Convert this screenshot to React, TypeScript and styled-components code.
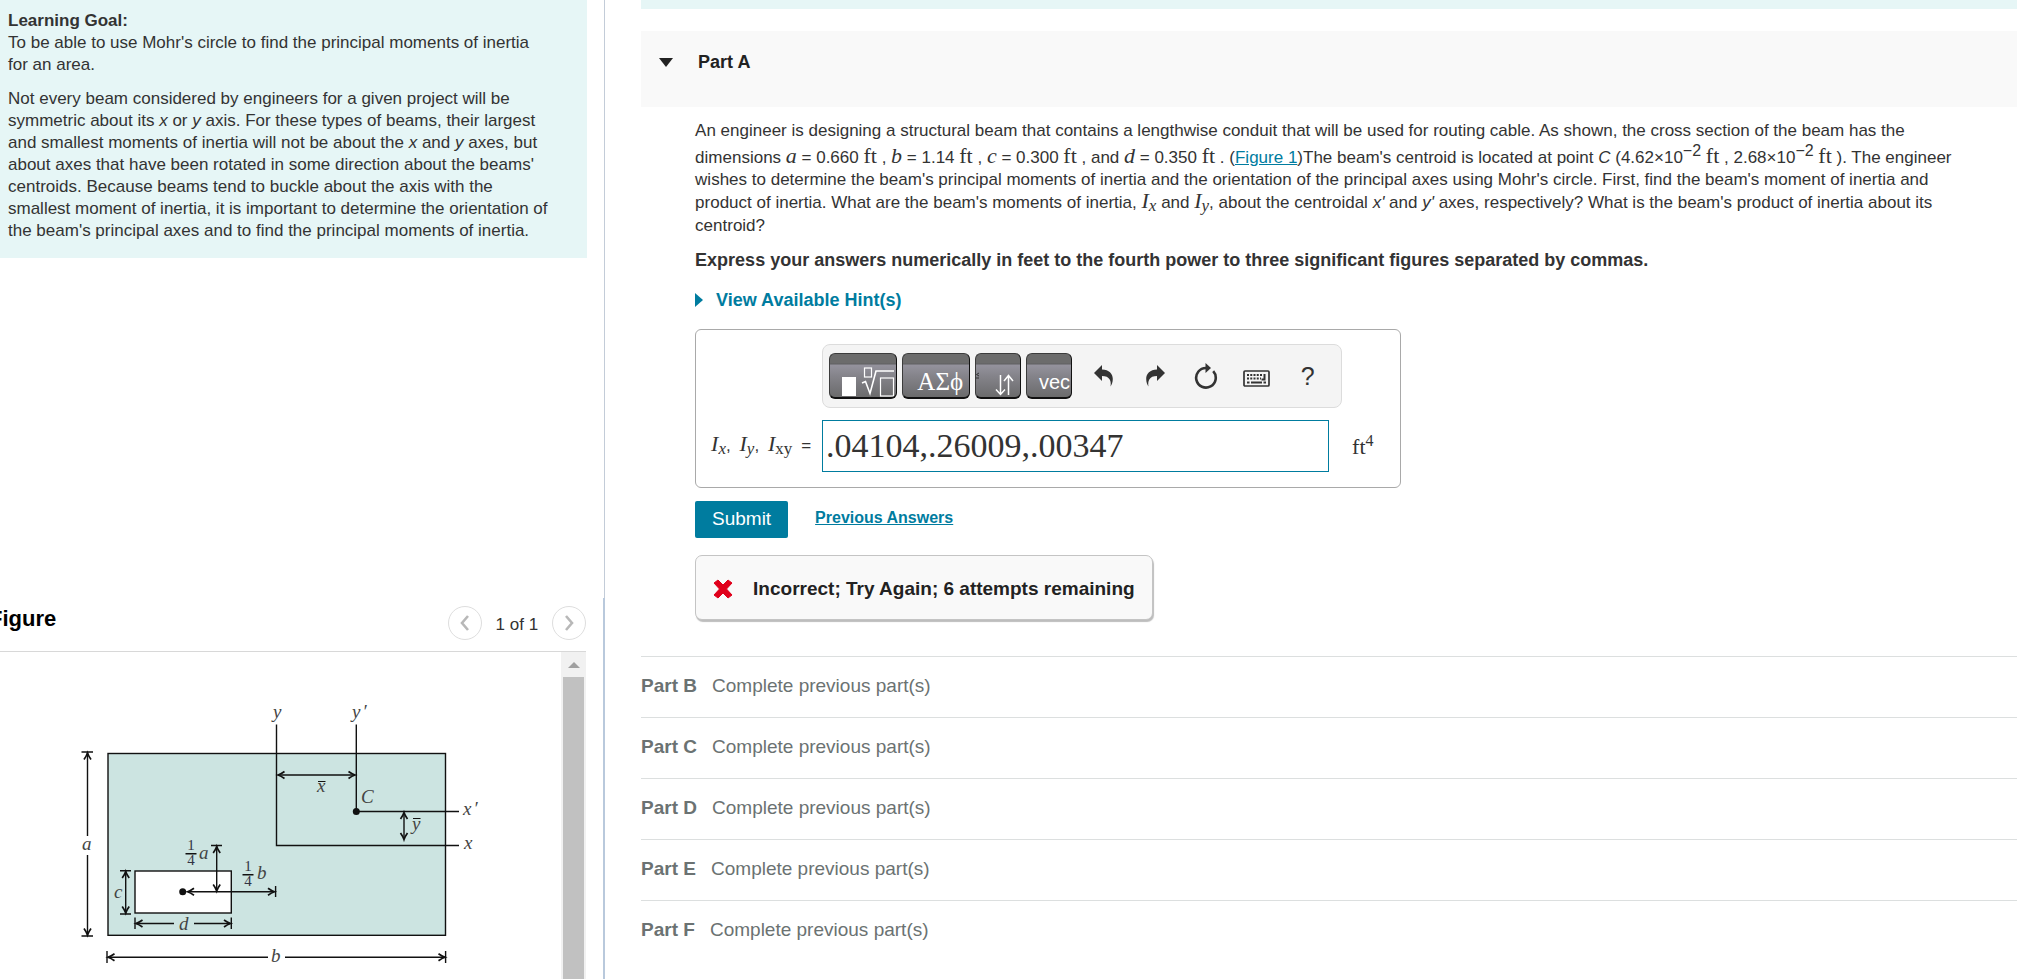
import React from "react";
import styled, { createGlobalStyle } from "styled-components";

const SANS = `"Liberation Sans", Arial, sans-serif`;
const SERIF = `"Liberation Serif", "Times New Roman", serif`;
const TEAL = "#007c9f";

const GlobalStyle = createGlobalStyle`
  *, *::before, *::after { box-sizing: border-box; }
  body { margin: 0; background: #fff; color: #333; font-family: ${SANS}; font-size: 17px; line-height: 22px; }
  p, h1, h2, h3 { margin: 0; }
  button, input { font-family: inherit; }
`;

const Page = styled.div`
  display: flex;
  height: 100vh;
  overflow: hidden;
`;

const Sidebar = styled.aside`
  flex: 0 0 30%;
  min-width: 0;
  display: flex;
  flex-direction: column;
`;

const GoalArea = styled.div`
  flex: 1;
  min-height: 0;
  padding-right: 17px;
  border-right: 1px solid #c3ccd8;
`;

const GoalCard = styled.section`
  display: flex;
  flex-direction: column;
  gap: 12px;
  padding: 10px 36px 16px 8px;
  background: #e6f6f6;
`;

const FigurePanel = styled.section`
  padding-right: 17px;
  border-right: 2px solid #b9c9dc;
`;

const FigureHeader = styled.header`
  display: flex;
  align-items: center;
  justify-content: space-between;
  height: 54px;
  padding-bottom: 4px;
  border-bottom: 1px solid #d8d8d8;
`;

const FigureTitle = styled.h2`
  margin-left: -11px;
  padding-bottom: 8px;
  font-size: 22px;
  line-height: 24px;
  color: #000;
`;

const Pager = styled.nav`
  display: flex;
  align-items: center;
  gap: 14px;
  font-size: 17px;
`;

const PagerCount = styled.span`
  padding-top: 4px;
`;

const PagerButton = styled.button`
  display: grid;
  place-items: center;
  width: 34px;
  height: 34px;
  padding: 0;
  border: 1px solid #dedede;
  border-radius: 50%;
  background: #fff;
`;

const FigureBody = styled.div`
  display: flex;
  justify-content: space-between;
  height: 327px;
`;

const ScrollTrack = styled.div`
  display: flex;
  flex-direction: column;
  align-items: center;
  gap: 9px;
  width: 25px;
  padding-top: 10px;
  background: #f1f1f1;
`;

const ScrollArrow = styled.span`
  border: 6px solid transparent;
  border-top: 0;
  border-bottom-color: #a0a0a0;
`;

const ScrollThumb = styled.div`
  flex: 1;
  width: 21px;
  background: #c1c1c1;
`;

const Main = styled.main`
  flex: 1;
  min-width: 0;
  padding-left: 36px;
`;

const Banner = styled.div`
  height: 9px;
  background: #e6f6f6;
`;

const PartHeader = styled.header`
  display: flex;
  align-items: center;
  gap: 25px;
  height: 76px;
  margin-top: 22px;
  padding: 0 18px 14px;
  background: #f9f9f9;
  color: #222;
`;

const PartTitle = styled.h2`
  font-size: 18px;
`;

const PartBody = styled.div`
  display: flex;
  flex-direction: column;
  align-items: flex-start;
  padding: 13px 32px 0 54px;
`;

const Instruction = styled.p`
  margin-top: 12px;
  font-size: 18px;
  font-weight: bold;
`;

const TextLink = styled.a`
  color: ${TEAL};
`;

const MathText = styled.span<{ $italic?: boolean }>`
  font-family: ${SERIF};
  font-size: 22px;
  line-height: 20px;
  font-style: ${(p) => (p.$italic ? "italic" : "normal")};
`;

const Sub = styled.sub<{ $upright?: boolean }>`
  vertical-align: -3px;
  font-size: 17px;
  line-height: 18px;
  font-style: ${(p) => (p.$upright ? "normal" : "italic")};
`;

const Power = styled.sup`
  font-size: 16px;
  line-height: 18px;
`;

const HintButton = styled.button`
  display: flex;
  align-items: center;
  gap: 13px;
  margin-top: 18px;
  padding: 0;
  border: 0;
  background: none;
  color: ${TEAL};
  font-size: 18px;
  font-weight: bold;
  line-height: 22px;
`;

const AnswerBox = styled.section`
  display: flex;
  flex-direction: column;
  gap: 12px;
  width: 706px;
  margin-top: 18px;
  padding: 14px 20px 15px 15px;
  border: 1px solid #a9a9a9;
  border-radius: 6px;
`;

const Toolbar = styled.div`
  display: flex;
  align-items: center;
  gap: 5px;
  width: 520px;
  height: 64px;
  margin-left: 111px;
  padding: 0 6px;
  border: 1px solid #dcdcdc;
  border-radius: 8px;
  background: #f4f4f4;
`;

const PaletteButton = styled.button<{ $width: number; $face?: string; $size?: number }>`
  display: flex;
  align-items: flex-end;
  justify-content: flex-end;
  width: ${(p) => p.$width}px;
  height: 46px;
  padding: 0;
  border: 1px solid #3c3c3c;
  border-right-color: #111;
  border-bottom: 2px solid #111;
  border-radius: 6px;
  background: linear-gradient(#6c6c6c 0 9px, #5f5f61 10px, #95939d 11px, #85848b 50%, #6b6b6c);
  color: #fff;
  font-family: ${(p) => p.$face ?? SANS};
  font-size: ${(p) => p.$size ?? 20}px;
  line-height: 30px;
  overflow: hidden;
`;

const PaletteText = styled.span<{ $inset: number }>`
  padding-right: ${(p) => p.$inset}px;
`;

const Tools = styled.div`
  display: flex;
  padding-left: 1px;
`;

const ToolButton = styled.button`
  display: grid;
  place-items: center;
  width: 51px;
  height: 40px;
  padding: 0;
  border: 0;
  background: none;
  color: #333;
  font-size: 25px;
  line-height: 30px;
`;

const AnswerRow = styled.div`
  display: flex;
  align-items: center;
`;

const AnswerLabel = styled.label`
  display: flex;
  flex: 0 0 111px;
  align-items: baseline;
  justify-content: space-between;
  padding-right: 11px;
  white-space: nowrap;
`;

const AnswerInput = styled.input`
  width: 507px;
  height: 52px;
  padding: 0 3px;
  border: 1px solid ${TEAL};
  background: #fff;
  color: #333;
  font-family: ${SERIF};
  font-size: 34px;
`;

const Unit = styled.span`
  margin-left: 23px;
`;

const Actions = styled.div`
  display: flex;
  align-items: center;
  gap: 27px;
  margin-top: 13px;
`;

const SubmitButton = styled.button`
  width: 93px;
  height: 37px;
  padding: 0;
  border: 0;
  border-radius: 2px;
  background: ${TEAL};
  color: #fff;
  font-size: 19px;
`;

const PreviousLink = styled(TextLink)`
  padding-bottom: 2px;
  font-size: 16px;
  font-weight: bold;
`;

const Feedback = styled.section`
  display: flex;
  align-items: center;
  gap: 20px;
  height: 65px;
  margin-top: 17px;
  padding: 3px 17px 0;
  border: 1px solid #c4c4c4;
  border-radius: 7px;
  background: #f9f9f9;
  box-shadow: 1px 2px 1px #bdbdbd;
  color: #222;
  font-size: 19px;
  font-weight: bold;
`;

const PartList = styled.div`
  margin-top: 36px;
`;

const PartRow = styled.section`
  display: flex;
  align-items: center;
  gap: 15px;
  height: 61px;
  padding-bottom: 1px;
  border-top: 1px solid #dcdfdf;
  color: #6b7272;
  font-size: 19px;
`;

const PartName = styled.h3`
  font-size: 19px;
`;

const UndoShape = () => (
  <path d="M0 8 8 0v4.500c7 .3 10.800 4 10.800 9.500 0 3-1 5.500-2.300 7.500.5-2.500.3-5-.8-7-1.400-2.500-4-3.400-7.700-3.500v5Z" fill="currentColor" />
);

const arrowHead = (x: number, y: number, dir: "l" | "r" | "u" | "d") => {
  const turn = { r: 0, d: 90, l: 180, u: 270 }[dir];
  return <path d="M-6.500-3.500Q-3-1 0 0Q-3 1-6.500 3.500" transform={`translate(${x} ${y}) rotate(${turn})`} />;
};

const BeamFigure = () => (
  <svg width="561" height="327" viewBox="0 0 561 327" role="img" aria-label="Beam cross section with dimensions">
    <g fill="none" stroke="#111" strokeWidth="1.4">
      <rect x="108" y="101.500" width="337.500" height="181.800" fill="#cce4e1" />
      <rect x="135" y="219" width="96.300" height="42" fill="#fff" />
      <path d="M276.500 72.500V193.500H459M356.300 72.500V159.500H459" />
      <path d="M279 123H354M404 161V187" />
      <path d="M87.500 100.500V184M87.500 203V283.500M81.500 100H93M81.500 284H93" />
      <path d="M125.700 219V261.500M120 218.700H131M120 262H131" />
      <path d="M136 271.500H174M194 271.500H230M135 265.500V277M231.300 265.500V277" />
      <path d="M108 305.300H268M285 305.300H445M107 299V311M445.600 299V311" />
      <path d="M188 239.700H273M275.600 234V245M216.700 194V238M211 193.500H222" />
      <path d="M185.500 201.700H196.500M242.500 222.700H253.500" />
      <path d="M318 129.500H325.500M413 166.500H420.500" strokeWidth="1.200" />
      <g strokeWidth="1.700">
        {arrowHead(278, 123, "l")}
        {arrowHead(355, 123, "r")}
        {arrowHead(404, 160.500, "u")}
        {arrowHead(404, 187.500, "d")}
        {arrowHead(87.500, 101, "u")}
        {arrowHead(87.500, 283, "d")}
        {arrowHead(125.700, 219.500, "u")}
        {arrowHead(125.700, 261, "d")}
        {arrowHead(136, 271.500, "l")}
        {arrowHead(230.500, 271.500, "r")}
        {arrowHead(108, 305.300, "l")}
        {arrowHead(445, 305.300, "r")}
        {arrowHead(187.500, 239.700, "l")}
        {arrowHead(274.500, 239.700, "r")}
        {arrowHead(216.700, 194.500, "u")}
        {arrowHead(216.700, 239, "d")}
      </g>
    </g>
    <circle cx="356.300" cy="159.500" r="3.500" fill="#111" />
    <circle cx="182.700" cy="239.700" r="3.500" fill="#111" />
    <g fontFamily={SERIF} fontSize="19" fontStyle="italic" fill="#444">
      <text x="273" y="66">y</text>
      <text x="352" y="66">y<tspan dx="2">′</tspan></text>
      <text x="317" y="140">x</text>
      <text x="361" y="151">C</text>
      <text x="412" y="178">y</text>
      <text x="463" y="163">x<tspan dx="2">′</tspan></text>
      <text x="464" y="197">x</text>
      <text x="82" y="198">a</text>
      <text x="114" y="246">c</text>
      <text x="179" y="278">d</text>
      <text x="271" y="310">b</text>
      <text x="199" y="207">a</text>
      <text x="257" y="227">b</text>
    </g>
    <g fontFamily={SERIF} fontSize="15" textAnchor="middle" fill="#334">
      <text x="191" y="198">1</text>
      <text x="191" y="213">4</text>
      <text x="248" y="219">1</text>
      <text x="248" y="234">4</text>
    </g>
  </svg>
);

const Chevron = ({ d }: { d: string }) => (
  <svg width="12" height="18" viewBox="0 0 12 18" fill="none" stroke="#b8b8b8" strokeWidth="2.600" aria-hidden="true">
    <path d={d} />
  </svg>
);

const Feet = () => <MathText>ft</MathText>;
const Var = ({ children }: { children: React.ReactNode }) => <MathText $italic>{children}</MathText>;

const lockedParts = ["Part B", "Part C", "Part D", "Part E", "Part F"];

export default function App() {
  return (
    <Page>
      <GlobalStyle />
      <Sidebar>
        <GoalArea>
          <GoalCard>
            <p>
              <b>Learning Goal:</b>
              <br />
              To be able to use Mohr's circle to find the principal moments of inertia for an area.
            </p>
            <p>
              Not every beam considered by engineers for a given project will be symmetric about its <i>x</i> or{" "}
              <i>y</i> axis. For these types of beams, their largest and smallest moments of inertia will not be about
              the <i>x</i> and <i>y</i> axes, but about axes that have been rotated in some direction about the beams'
              centroids. Because beams tend to buckle about the axis with the smallest moment of inertia, it is
              important to determine the orientation of the beam's principal axes and to find the principal moments of
              inertia.
            </p>
          </GoalCard>
        </GoalArea>
        <FigurePanel>
          <FigureHeader>
            <FigureTitle>Figure</FigureTitle>
            <Pager aria-label="Figures">
              <PagerButton aria-label="Previous figure">
                <Chevron d="M9 2 3 9l6 7" />
              </PagerButton>
              <PagerCount>1 of 1</PagerCount>
              <PagerButton aria-label="Next figure">
                <Chevron d="m3 2 6 7-6 7" />
              </PagerButton>
            </Pager>
          </FigureHeader>
          <FigureBody>
            <BeamFigure />
            <ScrollTrack>
              <ScrollArrow />
              <ScrollThumb />
            </ScrollTrack>
          </FigureBody>
        </FigurePanel>
      </Sidebar>

      <Main>
        <Banner />
        <PartHeader>
          <svg width="14" height="9" viewBox="0 0 14 9" aria-hidden="true">
            <path d="M0 0h14L7 9Z" fill="#222" />
          </svg>
          <PartTitle>Part A</PartTitle>
        </PartHeader>
        <PartBody>
          <p>
            An engineer is designing a structural beam that contains a lengthwise conduit that will be used for routing
            cable. As shown, the cross section of the beam has the dimensions <Var>a</Var> = 0.660 <Feet /> ,{" "}
            <Var>b</Var> = 1.14 <Feet /> , <Var>c</Var> = 0.300 <Feet /> , and <Var>d</Var> = 0.350 <Feet /> . (
            <TextLink href="#figure">Figure 1</TextLink>)The beam's centroid is located at point <i>C</i> (4.62×10
            <Power>−2</Power> <Feet /> , 2.68×10<Power>−2</Power> <Feet /> ). The engineer wishes to determine the
            beam's principal moments of inertia and the orientation of the principal axes using Mohr's circle. First,
            find the beam's moment of inertia and product of inertia. What are the beam's moments of inertia,{" "}
            <Var>
              I<Sub>x</Sub>
            </Var>{" "}
            and{" "}
            <Var>
              I<Sub>y</Sub>
            </Var>
            , about the centroidal <i>x'</i> and <i>y'</i> axes, respectively? What is the beam's product of inertia
            about its centroid?
          </p>
          <Instruction>
            Express your answers numerically in feet to the fourth power to three significant figures separated by
            commas.
          </Instruction>
          <HintButton>
            <svg width="8" height="14" viewBox="0 0 8 14" aria-hidden="true">
              <path d="M0 0 8 7 0 14Z" fill={TEAL} />
            </svg>
            View Available Hint(s)
          </HintButton>

          <AnswerBox>
            <Toolbar role="toolbar" aria-label="Equation tools">
              <PaletteButton $width={68} aria-label="Templates">
                <svg width="66" height="43" viewBox="0 0 66 43" fill="none" stroke="#fff" aria-hidden="true">
                  <rect x="12" y="23" width="14" height="19" fill="#fff" stroke="none" />
                  <rect x="34.500" y="14" width="7" height="9" strokeWidth="1.200" />
                  <path d="M32 29l3.500-1.500 4.500 12L46 17h18" strokeWidth="1.600" />
                  <rect x="50.500" y="24" width="13" height="18" strokeWidth="1.200" />
                </svg>
              </PaletteButton>
              <PaletteButton $width={68} $face={SERIF} $size={25} aria-label="Greek letters">
                <PaletteText $inset={6}>ΑΣϕ</PaletteText>
              </PaletteButton>
              <PaletteButton $width={46} aria-label="Arrows">
                <svg width="44" height="43" viewBox="0 0 44 43" fill="none" stroke="#fff" strokeWidth="1.500" aria-hidden="true">
                  <path d="M24.500 21v19M20 35.500l4.500 5 4.500-5M32.500 41V22M28 27l4.500-5.500L37 27" />
                  <path d="M3 19l-2.500 1.500L3 22M0 24h3" stroke="#333" strokeWidth="1" />
                </svg>
              </PaletteButton>
              <PaletteButton $width={46} aria-label="Vectors">
                <PaletteText $inset={1}>vec</PaletteText>
              </PaletteButton>
              <Tools>
                <ToolButton aria-label="Undo">
                  <svg width="20" height="22" viewBox="0 0 20 22" aria-hidden="true">
                    <UndoShape />
                  </svg>
                </ToolButton>
                <ToolButton aria-label="Redo">
                  <svg width="20" height="22" viewBox="0 0 20 22" aria-hidden="true">
                    <g transform="matrix(-1 0 0 1 20 0)">
                      <UndoShape />
                    </g>
                  </svg>
                </ToolButton>
                <ToolButton aria-label="Reset">
                  <svg width="24" height="26" viewBox="0 0 24 26" aria-hidden="true">
                    <path d="M19.200 8.200A9.800 9.800 0 1 1 12 5" fill="none" stroke="currentColor" strokeWidth="2.600" />
                    <path d="M11.500 0 17 5l-5.500 5Z" fill="currentColor" />
                  </svg>
                </ToolButton>
                <ToolButton aria-label="Keyboard shortcuts">
                  <svg width="27" height="24" viewBox="0 0 27 24" fill="none" stroke="currentColor" aria-hidden="true">
                    <rect x="1" y="7" width="25" height="15" rx="1" strokeWidth="1.700" />
                    <path d="M4 11h15M4 14.500h14" strokeWidth="2" strokeDasharray="2 1.250" />
                    <path d="M4 18.500h2.500M8 18.500h11M20.500 18.500H23M21.500 10v5.500H18.500" strokeWidth="2" />
                  </svg>
                </ToolButton>
                <ToolButton aria-label="Help">?</ToolButton>
              </Tools>
            </Toolbar>
            <AnswerRow>
              <AnswerLabel htmlFor="answer">
                <span>
                  <Var>
                    I<Sub>x</Sub>
                  </Var>
                  ,
                </span>
                <span>
                  <Var>
                    I<Sub>y</Sub>
                  </Var>
                  ,
                </span>
                <Var>
                  I<Sub $upright>xy</Sub>
                </Var>
                <span>=</span>
              </AnswerLabel>
              <AnswerInput id="answer" defaultValue=".04104,.26009,.00347" />
              <Unit>
                <MathText>
                  ft<Power>4</Power>
                </MathText>
              </Unit>
            </AnswerRow>
          </AnswerBox>

          <Actions>
            <SubmitButton>Submit</SubmitButton>
            <PreviousLink href="#previous">Previous Answers</PreviousLink>
          </Actions>

          <Feedback role="status">
            <svg width="20" height="20" viewBox="0 0 20 20" aria-hidden="true">
              <path d="M5 1 10 6 15 1 19 4 13.500 10 19 16 15 19 10 14 5 19 1 16 6.500 10 1 4Z" fill="#e0001b" stroke="#e0001b" strokeLinejoin="round" />
            </svg>
            Incorrect; Try Again; 6 attempts remaining
          </Feedback>
        </PartBody>

        <PartList>
          {lockedParts.map((name) => (
            <PartRow key={name}>
              <PartName>{name}</PartName>
              <span>Complete previous part(s)</span>
            </PartRow>
          ))}
        </PartList>
      </Main>
    </Page>
  );
}
